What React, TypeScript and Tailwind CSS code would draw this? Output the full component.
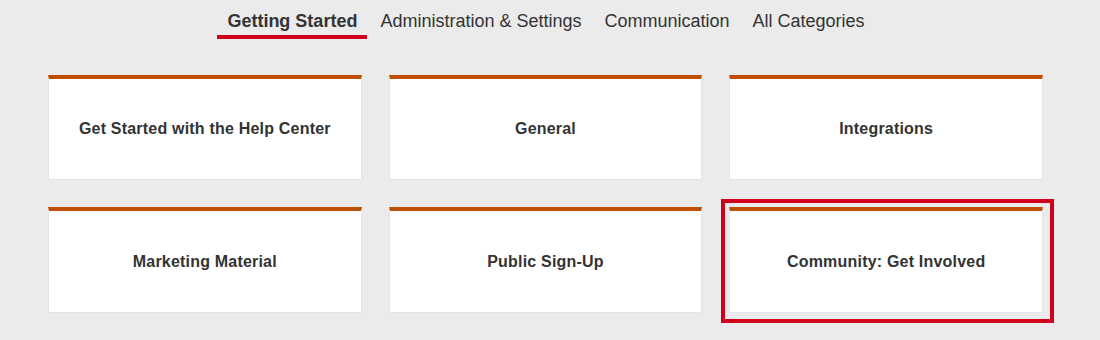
import React from "react";

const tabs = ["Getting Started", "Administration & Settings", "Communication", "All Categories"];
const cards = [
  "Get Started with the Help Center",
  "General",
  "Integrations",
  "Marketing Material",
  "Public Sign-Up",
  "Community: Get Involved",
];

export default function App() {
  return (
    <div
      className="w-[1100px] h-[340px] bg-[#ebebeb] overflow-hidden"
      style={{ fontFamily: '"Liberation Sans", Arial, sans-serif' }}
    >
      <div className="flex justify-center pt-[9px] gap-[3px] pr-[8px]">
        {tabs.map((t, i) => (
          <div key={t} className="flex flex-col items-center">
            <div
              className={
                "px-[10px] text-[18px] leading-[24px] text-[#333] " +
                (i === 0 ? "font-bold" : "")
              }
            >
              {t}
            </div>
            <div className={"mt-[2px] h-[4px] w-full " + (i === 0 ? "bg-[#d0021b]" : "bg-transparent")} />
          </div>
        ))}
      </div>
      <div className="ml-[48px] mt-[36px] w-[995px] grid grid-cols-3 gap-x-[27px] gap-y-[27px]">
        {cards.map((c, i) => (
          <div key={c} className="relative">
            <div
              className={
                (i >= 3 ? "h-[106px] " : "h-[105px] ") +
                "bg-white border border-[#e4e4e4] border-t-4 border-t-[#c14d00] flex items-center justify-center"
              }
            >
              <span className="text-[16px] font-bold text-[#333] tracking-[0.2px]">{c}</span>
            </div>
            {i === 5 && (
              <div className="absolute left-[-8px] top-[-8px] right-[-11px] bottom-[-10px] border-4 border-[#d0021b] pointer-events-none" />
            )}
          </div>
        ))}
      </div>
    </div>
  );
}
